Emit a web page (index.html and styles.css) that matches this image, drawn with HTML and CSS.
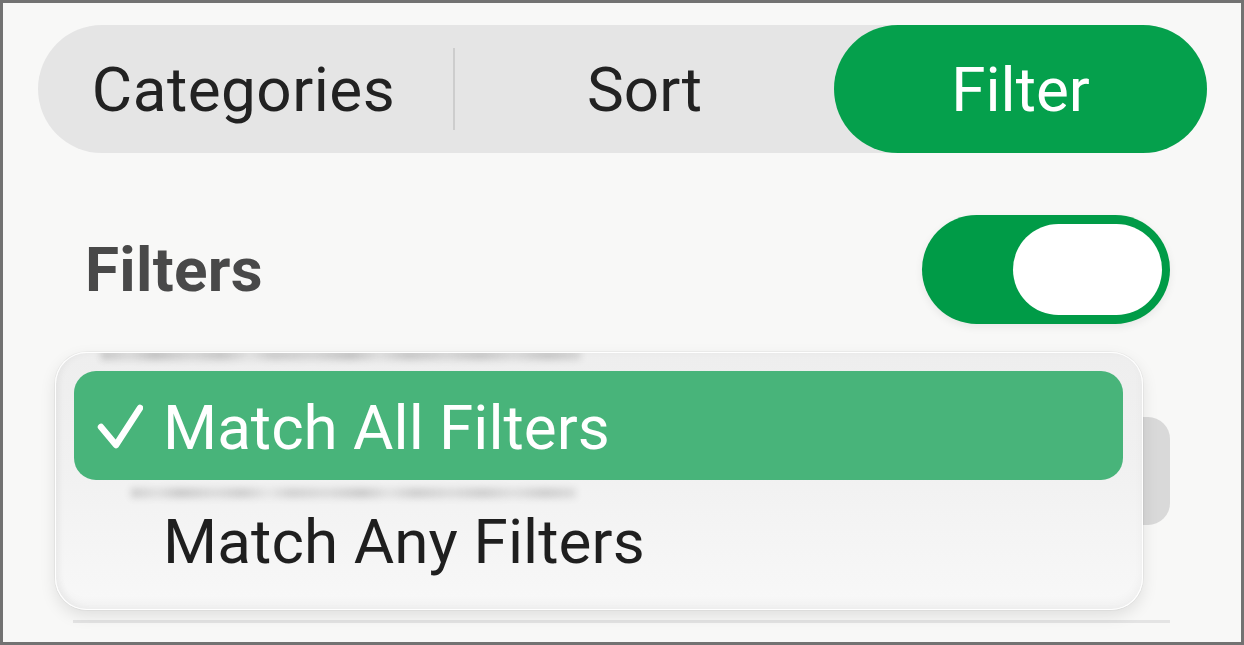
FILE: index.html
```html
<!DOCTYPE html>
<html lang="en">
<head>
<meta charset="utf-8">
<title>Filter</title>
<link rel="stylesheet" href="styles.css">
</head>
<body>
<div class="frame">
  <div class="segmented">
    <div class="seg seg-cat">Categories</div>
    <div class="seg-sep"></div>
    <div class="seg seg-sort">Sort</div>
    <div class="seg seg-filter">Filter</div>
  </div>

  <div class="filters-row">
    <div class="filters-title">Filters</div>
    <div class="toggle"><div class="knob"></div></div>
  </div>

  <div class="popup-btn"></div>
  <div class="rule"></div>

  <div class="menu">
    <div class="ghost ghost-top"></div>
    <div class="ghost ghost-mid"></div>
    <div class="menu-item selected">
      <svg class="check" viewBox="0 0 46 46" width="46" height="46"><path d="M4 24 L19 42 L43 5" fill="none" stroke="#fff" stroke-width="6.5" stroke-linecap="round" stroke-linejoin="round"/></svg>
      <span>Match All Filters</span>
    </div>
    <div class="menu-item">
      <span class="check-space"></span>
      <span>Match Any Filters</span>
    </div>
  </div>
</div>
</body>
</html>
```

FILE: styles.css
```css
html, body {
  margin: 0;
  padding: 0;
  background: #f8f8f7;
}

.frame {
  position: relative;
  width: 1244px;
  height: 645px;
  box-sizing: border-box;
  border: 3px solid #727272;
  background: #f8f8f7;
  padding: 22px 34px 0 35px;
  font-family: Roboto, "Liberation Sans", sans-serif;
  overflow: hidden;
}

.segmented {
  display: flex;
  align-items: center;
  height: 128px;
  border-radius: 64px;
  background: #e5e5e5;
}

.seg {
  height: 128px;
  display: flex;
  align-items: center;
  justify-content: center;
  font-size: 62px;
  color: #222222;
}

.seg-cat {
  width: 415px;
  letter-spacing: 0.5px;
  padding-right: 4px;
  box-sizing: border-box;
}
.seg-sep {
  width: 2px;
  height: 82px;
  background: #cdcdcd;
}
.seg-sort { width: 379px; }
.seg-filter {
  width: 373px;
  border-radius: 64px;
  background: #05a04c;
  color: #ffffff;
}

.filters-row {
  display: flex;
  align-items: center;
  justify-content: space-between;
  margin-top: 62px;
  padding: 0 37px 0 47px;
}

.filters-title {
  font-size: 62px;
  font-weight: 700;
  color: #494949;
  letter-spacing: 0.3px;
}

.toggle {
  width: 248px;
  height: 109px;
  box-sizing: border-box;
  border-radius: 55px;
  background: #009b47;
  display: flex;
  align-items: center;
  justify-content: flex-end;
  padding-right: 8px;
  box-shadow: 0 3px 8px rgba(0, 0, 0, 0.07);
}

.knob {
  width: 149px;
  height: 91px;
  border-radius: 46px;
  background: #ffffff;
}

.popup-btn {
  margin: 93px 37px 0 35px;
  height: 108px;
  border-radius: 22px;
  background: #d9d9d9;
}

.rule {
  margin: 95px 37px 0 35px;
  height: 3px;
  background: #e4e4e4;
}

.menu {
  position: absolute;
  left: 52px;
  top: 349px;
  width: 1088px;
  height: 258px;
  box-sizing: border-box;
  padding: 18px 19px 0 18px;
  border: 1px solid rgba(255, 255, 255, 0.95);
  border-radius: 32px;
  background: linear-gradient(to bottom, #eeeeee 0%, #f1f1f1 45%, #f8f8f8 100%);
  box-shadow: 0 6px 16px rgba(0, 0, 0, 0.10), 0 0 0 1px rgba(0, 0, 0, 0.035), inset 4px 0 6px rgba(0, 0, 0, 0.03), inset 0 -6px 10px rgba(0, 0, 0, 0.035);
  overflow: hidden;
}

.ghost {
  position: absolute;
  height: 10px;
  background: linear-gradient(90deg,
    rgba(60,60,60,0.5) 0%, rgba(60,60,60,0.25) 6%, rgba(60,60,60,0.55) 11%, rgba(60,60,60,0.3) 19%,
    rgba(60,60,60,0.5) 25%, rgba(60,60,60,0.15) 31%, rgba(60,60,60,0.45) 36%, rgba(60,60,60,0.3) 44%,
    rgba(60,60,60,0.55) 52%, rgba(60,60,60,0.2) 58%, rgba(60,60,60,0.5) 64%, rgba(60,60,60,0.3) 72%,
    rgba(60,60,60,0.5) 79%, rgba(60,60,60,0.25) 86%, rgba(60,60,60,0.5) 93%, rgba(60,60,60,0.3) 100%);
  filter: blur(3.5px);
}

.ghost-top {
  left: 45px;
  top: -3px;
  width: 480px;
  opacity: 0.45;
}

.ghost-mid {
  left: 75px;
  top: 135px;
  width: 445px;
  opacity: 0.4;
}

.menu-item {
  position: relative;
  height: 109px;
  box-sizing: border-box;
  border-radius: 22px;
  display: flex;
  align-items: center;
  padding-left: 23px;
  padding-top: 4px;
  font-size: 62px;
  color: #1f1f1f;
}

.menu-item + .menu-item {
  margin-top: 5px;
}

.menu-item.selected {
  background: #48b47a;
  color: #ffffff;
}

.menu-item:not(.selected) {
  letter-spacing: 0.1px;
}

.check {
  width: 46px;
  height: 46px;
  margin-right: 20px;
  margin-top: -4px;
  flex: none;
}

.check-space {
  width: 66px;
  flex: none;
}
```
